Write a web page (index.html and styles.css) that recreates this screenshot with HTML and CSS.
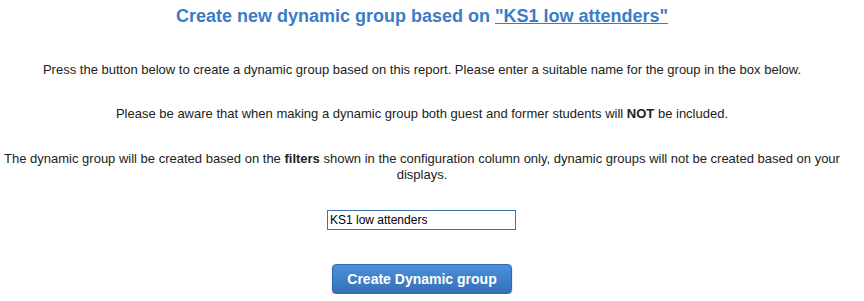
FILE: index.html
```html
<!DOCTYPE html>
<html>
<head>
    <meta charset="utf-8" />
    <title>Create dynamic group</title>
    <link rel="stylesheet" href="styles.css">
</head>
<body>
    <h2 class="title">Create new dynamic group based on <a href="#">"KS1 low attenders"</a></h2>

    <p class="intro">Press the button below to create a dynamic group based on this report. Please enter a suitable name for the group in the box below.</p>

    <p class="warning">Please be aware that when making a dynamic group both guest and former students will <b>NOT</b> be included.</p>

    <p class="note">The dynamic group will be created based on the <b>filters</b> shown in the configuration column only, dynamic groups will not be created based on your displays.</p>

    <div class="field">
        <input type="text" class="group-name" value="KS1 low attenders">
    </div>

    <div class="actions">
        <button class="btn">Create Dynamic group</button>
    </div>
</body>
</html>
```

FILE: styles.css
```css
body {
    margin: 0;
    padding: 0 22px 0 2px;
    text-align: center;
    font-family: "Liberation Sans", Arial, sans-serif;
    font-size: 13px;
    color: #222;
}

h2.title {
    margin: 5px 0 0 0;
    font-size: 18px;
    line-height: 22px;
    font-weight: bold;
    color: #3a7cc6;
}

h2.title a {
    color: #3a7cc6;
}

p {
    margin: 0;
    line-height: 16px;
}

p.intro {
    margin-top: 35px;
}

p.warning {
    margin-top: 28px;
}

p.note {
    margin-top: 29px;
}

div.field {
    margin-top: 27px;
}

input.group-name {
    width: 183px;
    height: 16px;
    padding: 1px 2px;
    border: 1px solid #3a74b0;
    font-family: "Liberation Sans", Arial, sans-serif;
    font-size: 12px;
    color: #000;
    margin-left: -1px;
}

div.actions {
    margin-top: 34px;
}

button.btn {
    width: 180px;
    height: 30px;
    border: 1px solid #3369ad;
    border-radius: 4px;
    background: linear-gradient(#4b91d9, #3470ba);
    box-shadow: 0 1px 2px rgba(0, 0, 0, 0.25);
    color: #fff;
    font-family: "Liberation Sans", Arial, sans-serif;
    font-size: 14px;
    font-weight: bold;
    cursor: pointer;
}
```
